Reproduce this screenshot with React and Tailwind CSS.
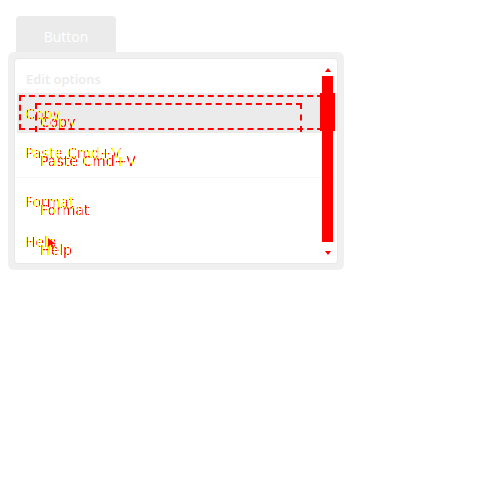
import React from "react";

const stripe =
  "bg-[repeating-linear-gradient(90deg,#ffff00_0px,#ffff00_2px,#ff0000_2px,#ff0000_3px)] bg-clip-text text-transparent";
const stripe2 =
  "bg-[repeating-linear-gradient(90deg,#ff0000_0px,#ff0000_2px,#ffff00_2px,#ffff00_3px)] bg-clip-text text-transparent";

function Label({ children }) {
  return (
    <div className="relative text-[14px] leading-[18px] font-['DejaVu_Sans',sans-serif]">
      <span className={stripe}>{children}</span>
      <span className={`absolute left-[15px] top-[8px] whitespace-nowrap ${stripe2}`}>{children}</span>
    </div>
  );
}

export default function App() {
  return (
    <div className="w-[500px] h-[500px] bg-white p-2 font-['Open_Sans',sans-serif]">
      <div className="ml-2 mt-2 w-[100px] h-9 bg-[#ebebeb] rounded-t-sm flex items-center justify-center pt-[5px] text-white text-[14px]">
        Button
      </div>
      <div className="w-[336px] h-[218px] bg-[#f0f0f0] rounded-md p-[6px]">
        <div className="relative h-full bg-white rounded border border-[#e8e8e8] px-[2px] flex flex-col">
          <div className="h-[34px] shrink-0 flex items-center pl-[9px] pt-[8px] text-[13px] font-semibold text-[#ebebeb]">
            Edit options
          </div>
          <div className="relative h-10 shrink-0 bg-[#ebebeb] flex items-center pl-[8px] pt-[2px]">
            <Label>Copy</Label>
            <div className="absolute left-[2px] right-[2px] top-[2px] bottom-[3px] border-2 border-dashed border-[#ff0000]" />
            <div className="absolute left-[18px] right-[33px] top-[10px] bottom-[1px] border-2 border-b-0 border-dashed border-[#ff0000]" />
          </div>
          <div className="h-11 shrink-0 flex items-center pl-[8px] pb-[4px]">
            <Label>Paste Cmd+V</Label>
          </div>
          <div className="h-px shrink-0 bg-[#f7f7f7]" />
          <div className="h-[40px] shrink-0 flex items-center pl-[8px] pt-[8px]">
            <Label>Format</Label>
          </div>
          <div className="h-[40px] shrink-0 flex items-center pl-[8px] pt-[8px] relative">
            <Label>Help</Label>
            <svg className="absolute left-[30px] top-[19px]" width="10" height="12" viewBox="0 0 10 12">
              <path d="M1 1 L1 10 L3.5 7.5 L5.5 11 L7 10.2 L5.2 7 L8.5 7 Z" fill="#ff0000" />
            </svg>
          </div>
          <div className="absolute right-[2px] top-[8px] bottom-[8px] w-[15px] flex flex-col items-center">
            <div className="w-0 h-0 border-l-[3px] border-r-[3px] border-b-[4px] border-l-transparent border-r-transparent border-b-[#ff0000] mt-[1px]" />
            <div className="relative w-[11px] mt-[4px] h-[166px] bg-[#ff0000]">
              <div className="absolute -left-[2px] -right-[2px] top-[17px] h-[38px] bg-[#ff0000]" />
            </div>
            <div className="w-0 h-0 border-l-[3px] border-r-[3px] border-t-[4px] border-l-transparent border-r-transparent border-t-[#ff0000] mt-[9px]" />
          </div>
        </div>
      </div>
    </div>
  );
}
